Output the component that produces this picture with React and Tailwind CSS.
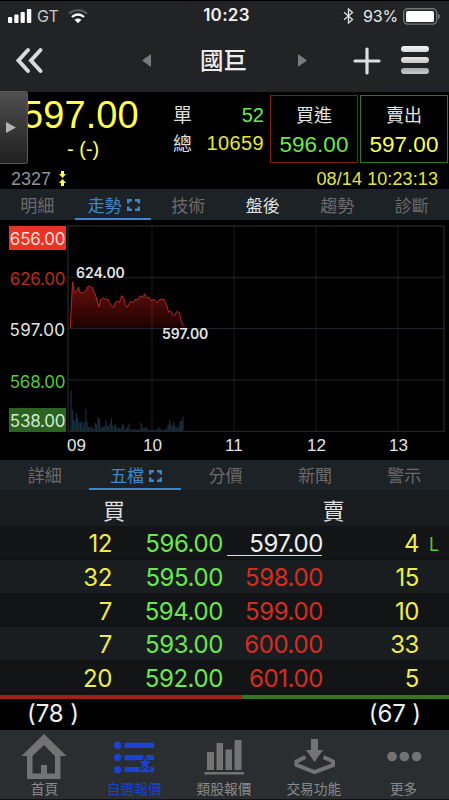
import { useState } from 'react';

const quoteTabs = ['明細', '走勢', '技術', '盤後', '趨勢', '診斷'];
const depthTabs = ['詳細', '五檔', '分價', '新聞', '警示'];

const depth = [
  { bidVol: 12, bid: '596.00', ask: '597.00', askVol: 4 },
  { bidVol: 32, bid: '595.00', ask: '598.00', askVol: 15 },
  { bidVol: 7, bid: '594.00', ask: '599.00', askVol: 10 },
  { bidVol: 7, bid: '593.00', ask: '600.00', askVol: 33 },
  { bidVol: 20, bid: '592.00', ask: '601.00', askVol: 5 },
];

// price line, in thirds of a pixel
const pricePoints =
  '25,190 27,140 32,50 35,72 40,84 44,80 49,66 54,82 62,85 66,80 71,80 76,66 82,62 86,66 92,68 96,84 100,86 104,105 111,126 115,105 124,98 130,103 138,103 142,112 150,125 156,126 160,112 166,108 172,113 176,100 180,92 186,102 190,122 196,126 206,108 212,114 220,103 228,104 236,92 242,98 248,86 253,98 262,98 268,108 276,103 286,114 292,104 305,102 314,120 320,142 326,138 334,152 338,152 344,140 352,142 358,168 364,182 368,184';

const volumes = [
  122, 65, 34, 32, 54, 40, 26, 24, 30, 14, 26, 65, 26, 12, 10, 14, 6, 8, 24, 20, 42, 38, 10, 14,
  12, 16, 32, 14, 16, 24, 38, 18, 14, 20, 12, 6, 10, 8, 22, 16, 4, 8, 14, 22, 4, 3, 6, 4, 5, 5, 4,
  5, 24, 10, 10, 10, 10, 2, 3, 3, 4, 4, 2, 3, 4, 12, 6, 2, 2, 3, 4, 8, 18, 32, 22, 14, 26, 16, 8,
  12, 16, 32, 30, 44,
];

function StatusBar() {
  return (
    <div className="grid h-[30px] grid-cols-3 items-center text-[16px] text-[#e8e8e8]">
      <div className="flex items-center pl-2">
        <svg width="24" height="15" viewBox="0 0 24 15" fill="#fff">
          <rect x="0" y="8" width="4.2" height="6" rx="1" />
          <rect x="6.3" y="5.5" width="4.2" height="8.5" rx="1" />
          <rect x="12.6" y="3" width="4.2" height="11" rx="1" />
          <rect x="18.9" y="0" width="4.4" height="14" rx="1" />
        </svg>
        <span className="ml-[5px] text-[#c8c8c8]">GT</span>
        <svg className="ml-[9px]" width="20" height="15" viewBox="0 0 20 15" fill="none">
          <path d="M1 4.8C6-.2 14-.2 19 4.8" stroke="#58595b" strokeWidth="2.2" />
          <path d="M4 8C7.5 4.6 12.5 4.6 16 8" stroke="#fff" strokeWidth="2.4" />
          <path d="M6.6 10.8C8.6 9 11.4 9 13.4 10.8L10 14.2Z" fill="#fff" />
        </svg>
      </div>
      <div className="pl-1 text-center text-[17px] font-semibold tracking-[0.3px] text-[#f0f0f0]">10:23</div>
      <div className="flex items-center justify-end pr-2">
        <svg width="11" height="16" viewBox="0 0 11 16" fill="none" stroke="#e0e0e0" strokeWidth="1.3">
          <path d="M1 4.3L9.5 11.5L5.5 15V1L9.5 4.5L1 11.7" />
        </svg>
        <span className="ml-[9px] tracking-[-0.2px]">93%</span>
        <svg className="ml-[5px]" width="38" height="17" viewBox="0 0 38 17">
          <rect x=".7" y=".7" width="33" height="15.4" rx="4" fill="none" stroke="#737476" strokeWidth="1.4" />
          <rect x="3" y="3" width="28" height="11" rx="1.5" fill="#fff" />
          <path d="M35 5.5c2.5 1 2.5 5 0 6z" fill="#737476" />
        </svg>
      </div>
    </div>
  );
}

function TitleBar() {
  return (
    <div className="flex h-[61px] items-center">
      <svg className="-mt-[3px] ml-[15px]" width="29" height="27" viewBox="0 0 29 27" fill="none" stroke="#d9d9d9" strokeWidth="4" strokeLinecap="round">
        <path d="M13 3L3.5 13.5L13 24M25.5 3L16 13.5L25.5 24" />
      </svg>
      <svg className="-mt-[3px] ml-[98px]" width="9" height="13" viewBox="0 0 9 13">
        <path d="M9 0V13L0 6.5Z" fill="#747b7d" />
      </svg>
      <h1 className="-mt-[2px] ml-[49px] w-[48px] text-[23.5px] leading-none font-medium text-[#eee]">國巨</h1>
      <svg className="-mt-[3px] ml-[50px]" width="9" height="13" viewBox="0 0 9 13">
        <path d="M0 0V13L9 6.5Z" fill="#747b7d" />
      </svg>
      <svg className="-mt-px ml-[46px]" width="28" height="28" viewBox="0 0 28 28" stroke="#dedede" strokeWidth="3.2" strokeLinecap="round">
        <path d="M14 2V26M2 14H26" />
      </svg>
      <div className="-mt-[3px] ml-5 flex w-[28px] flex-col gap-[5px]">
        <span className="h-1.5 rounded-full bg-linear-to-b from-[#f4f4f4] to-[#d8d8d8]" />
        <span className="h-1.5 rounded-full bg-linear-to-b from-[#e4e4e4] to-[#c6c6c6]" />
        <span className="h-1.5 rounded-full bg-linear-to-b from-[#a8a8a8] to-[#c8c8c8]" />
      </div>
    </div>
  );
}

function Quote() {
  return (
    <div className="relative h-[97px] font-['Liberation_Sans','Noto_Sans_CJK_TC',sans-serif]">
      <div className="flex h-[76px]">
        <div className="w-[164px] pl-[22px] text-[#ffff54]">
          <div className="pt-[4px] text-[38px] leading-[38px] tracking-[0.1px]">597.00</div>
          <div className="mt-[5px] pl-[45px] text-[20px] leading-[20px]">- (-)</div>
        </div>
        <div className="w-[100px] pt-[12px] text-[20px]">
          <div className="flex h-[28px] justify-between pl-[9px] leading-[22px]">
            <span className="pt-px text-[19px] text-[#ddd]">單</span>
            <span className="text-[#6be84d]">52</span>
          </div>
          <div className="flex h-[28px] justify-between pl-[9px] leading-[22px]">
            <span className="pt-[2px] text-[19px] text-[#ddd]">總</span>
            <span className="text-[#e6e63c] tracking-[0.4px]">10659</span>
          </div>
        </div>
        <button className="mt-[3px] ml-[6px] h-[68px] w-[88px] border border-[#7d1e15] text-center">
          <div className="mt-[3px] text-[18px] leading-[28px] text-[#e4e4e4]">買進</div>
          <div className="text-[22.5px] leading-[30px] text-[#6be84d]">596.00</div>
        </button>
        <button className="mt-[3px] ml-[2px] h-[68px] w-[88px] border border-[#2f781d] text-center">
          <div className="mt-[3px] text-[18px] leading-[28px] text-[#e4e4e4]">賣出</div>
          <div className="text-[22.5px] leading-[30px] text-[#ffff54]">597.00</div>
        </button>
      </div>
      <div className="flex h-[21px] items-center justify-between pt-[2px] pr-[11px] pl-[11px] text-[18px]">
        <div className="flex items-center text-[#8b959a]">
          2327
          <svg className="-mt-[2px] ml-[8px]" width="7" height="15" viewBox="0 0 7 15" fill="#ffff54">
            <path d="M2 0h3v3h2L3.5 7 0 3h2zM2 15h3v-3h2L3.5 8 0 12h2z" />
          </svg>
        </div>
        <div className="tracking-[0.1px] text-[#e6e63c]">08/14 10:23:13</div>
      </div>
      <div className="absolute top-[-1px] left-0 flex h-[73px] w-[28px] items-center rounded-r-[3px] border border-l-0 border-[#5a5a5a] bg-linear-to-b from-[#505050] to-[#202020] pl-1.5">
        <svg width="10" height="11" viewBox="0 0 10 11">
          <path d="M0 0L10 5.5L0 11Z" fill="#b4b4b4" />
        </svg>
      </div>
    </div>
  );
}

function ExpandIcon() {
  return (
    <svg className="-mt-[2px] ml-[5px]" width="13" height="12" viewBox="0 0 13 12" fill="none" stroke="#3d87c9" strokeWidth="2.4">
      <path d="M1.2 4.6V1.2H5M8 1.2H11.8V4.6M11.8 7.4V10.8H8M5 10.8H1.2V7.4" />
    </svg>
  );
}

function Tabs({ items, active, onSelect, bright, className }) {
  return (
    <div className={`flex bg-[#1d2226] ${className}`}>
      {items.map((item) => (
        <button
          key={item}
          onClick={() => onSelect(item)}
          className={`flex flex-1 items-center justify-center border-b-2 pt-[5px] text-[17px] leading-none ${
            item === active
              ? 'border-[#3d87c9] pl-[2px] text-[#3d87c9]'
              : item === bright
                ? 'border-transparent text-[#e0e0e0]'
                : 'border-transparent text-[#6f6a69]'
          }`}
        >
          {item}
          {item === active && <ExpandIcon />}
        </button>
      ))}
    </div>
  );
}

function Chart() {
  return (
    <div className="flex h-[240px] text-[17px] text-[#e4e4e4]">
      <div className="ml-[9px] flex w-[57px] flex-col pt-[6px] text-center tracking-[-0.25px]">
        <div className="h-[24px] bg-[#eb3323] leading-[26px] text-[#ffdcd8]">656.00</div>
        <div className="mt-[17px] h-[24px] leading-[24px] text-[#bd2a1d]">626.00</div>
        <div className="mt-[27px] h-[24px] leading-[24px] tracking-[0.3px]">597.00</div>
        <div className="mt-[28px] h-[24px] leading-[24px] text-[#57c73d]">568.00</div>
        <div className="mt-[14px] h-[24px] bg-[#2a6322] leading-[26px] text-[#d5ead0]">538.00</div>
      </div>
      <div className="relative ml-px w-[382px] pt-[5px]">
        <svg width="378" height="207" viewBox="0 0 378 207" className="block">
          <defs>
            <linearGradient id="fill" x1="0" y1="0" x2="0" y2="1">
              <stop offset="0" stopColor="#6b0f0c" />
              <stop offset="1" stopColor="#1d0202" />
            </linearGradient>
          </defs>
          <rect x="1" y="1" width="376" height="205.5" fill="none" stroke="#242424" strokeWidth="1.4" />
          <path d="M1 52.5H377M1 155H377" stroke="#191a1b" strokeWidth="1.4" />
          <g transform="translate(-5 40) scale(.3333)">
            <polygon points={`25,190 ${pricePoints} 368,190`} fill="url(#fill)" />
            <polyline points={pricePoints} fill="none" stroke="#b3281e" strokeWidth="3" strokeLinejoin="round" />
          </g>
          <path d="M85 1V206M167 1V206M249 1V206M331 1V206" stroke="#fff" strokeOpacity=".07" strokeWidth="1.5" />
          <path d="M1 103.5H377" stroke="#1a262d" />
          {volumes.map((v, i) => (
            <rect key={i} x={3.4 + i * 1.35} y={206 - v / 3} width="1.25" height={v / 3} fill="#16303f" />
          ))}
        </svg>
        <div className="flex pt-[4px] font-['Liberation_Sans',sans-serif] text-[17px] leading-[20px]">
          <span className="w-[76px]">09</span>
          <span className="w-[82px]">10</span>
          <span className="w-[82px]">11</span>
          <span className="w-[82px]">12</span>
          <span>13</span>
        </div>
        <span className="absolute top-[46px] left-[9px] text-[14px] leading-[14px] font-semibold">624.00</span>
        <span className="absolute top-[107px] left-[95px] text-[14px] leading-[14px] font-semibold">597.00</span>
      </div>
    </div>
  );
}

function DepthTable() {
  return (
    <div>
      <div className="flex h-[36px] items-center bg-[#191d20] pt-[5px] text-[22px] leading-none font-normal text-[#e0e0e0]">
        <span className="w-[228px] text-center">買</span>
        <span className="w-[210px] pl-px text-center">賣</span>
      </div>
      {depth.map((row, i) => (
        <div
          key={row.bid}
          className="grid h-[33.8px] grid-cols-[112px_111px_100px_96px_30px] items-center border-b border-[#101214] text-right text-[24px] tracking-[-0.4px] odd:bg-[#191d20] even:bg-[#131416]"
        >
          <span className="text-[#f0ec50]">{row.bidVol}</span>
          <span className="text-[#6be84d]">{row.bid}</span>
          {i === 0 ? (
            <span className="relative text-[#eee]">
              {row.ask}
              <span className="absolute right-px bottom-[6px] left-[4px] h-px bg-[#f0ec50]" />
            </span>
          ) : (
            <span className="text-[#d62d20]">{row.ask}</span>
          )}
          <span className="text-[#f0ec50]">{row.askVol}</span>
          {i === 0 && <span className="pl-2.5 text-left text-[18px] text-[#57c73d]">L</span>}
        </div>
      ))}
      <div className="flex h-[4px]">
        <div className="w-[242px] bg-[#a32015]" />
        <div className="flex-1 bg-[#33781f]" />
      </div>
      <div className="flex h-[31px] items-center justify-between pr-[28px] pl-[27px] text-[24px] tracking-[-0.1px] text-[#eee]">
        <span>(78 )</span>
        <span>(67 )</span>
      </div>
    </div>
  );
}

const star =
  'M35 23.5L36.5 27.4L40.7 27.6L37.4 30.3L38.5 34.4L35 32.1L31.5 34.4L32.6 30.3L29.3 27.6L33.5 27.4Z';

const navItems = [
  {
    label: '首頁',
    icon: (
      <path d="M24 0L46.5 22H40.5V45H7V22H1.5ZM24 11L12.5 22V39.5H21V31H27V39.5H35V22Z" fillRule="evenodd" />
    ),
  },
  {
    label: '自選報價',
    icon: (
      <>
        <circle cx="7.6" cy="11.3" r="3.7" />
        <circle cx="7.6" cy="23.5" r="3.7" />
        <circle cx="7.6" cy="35.7" r="3.7" />
        <path d="M14.5 8.7H44V14H14.5ZM14.5 21H44V26.3H14.5ZM14.5 33H44V38.3H14.5Z" />
        <path d={star} fill="#2a2e31" stroke="#2a2e31" strokeWidth="3" />
        <path d={star} stroke="currentColor" strokeWidth=".6" />
      </>
    ),
  },
  {
    label: '類股報價',
    icon: <path d="M7 18H14V36H7ZM16.5 9H23V36H16.5ZM25.5 15.5H32V36H25.5ZM34.5 6H41.5V36H34.5ZM4.5 38H44V40.5H4.5Z" />,
  },
  {
    label: '交易功能',
    icon: (
      <>
        <path d="M21 5H28V16H33L24.5 28L16 16H21Z" />
        <path d="M15.5 23L6.5 27.5V31L24.5 38L43 31V27.5L33.5 23" fill="none" stroke="currentColor" strokeWidth="4" />
      </>
    ),
  },
  {
    label: '更多',
    icon: (
      <>
        <circle cx="12" cy="22.5" r="4.8" />
        <circle cx="24.3" cy="22.5" r="4.8" />
        <circle cx="36.6" cy="22.5" r="4.8" />
      </>
    ),
  },
];

function BottomNav() {
  return (
    <div className="flex h-[70px] border-b border-[#101214] bg-[#2a2e31]">
      {navItems.map(({ label, icon }) => (
        <button
          key={label}
          className={`flex flex-1 flex-col items-center pt-[4px] pr-px ${label === '自選報價' ? 'text-[#1b42d1]' : 'text-[#737373]'}`}
        >
          <svg width="48" height="46" viewBox="0 0 48 46" fill="currentColor">
            {icon}
          </svg>
          <span className={`text-[13.7px] leading-[18px] ${label === '自選報價' ? '' : 'text-[#8a8a8a]'}`}>{label}</span>
        </button>
      ))}
    </div>
  );
}

export default function App() {
  const [quoteTab, setQuoteTab] = useState('走勢');
  const [depthTab, setDepthTab] = useState('五檔');

  return (
    <div className="h-[800px] w-[449px] overflow-hidden bg-black font-['Inter','Noto_Sans_CJK_TC',sans-serif]">
      <div className="h-[92px] border-t border-black bg-[#222325]">
        <StatusBar />
        <TitleBar />
      </div>
      <Quote />
      <Tabs items={quoteTabs} active={quoteTab} onSelect={setQuoteTab} bright="盤後" className="h-[31px]" />
      <Chart />
      <Tabs items={depthTabs} active={depthTab} onSelect={setDepthTab} className="h-[30px]" />
      <DepthTable />
      <BottomNav />
    </div>
  );
}
